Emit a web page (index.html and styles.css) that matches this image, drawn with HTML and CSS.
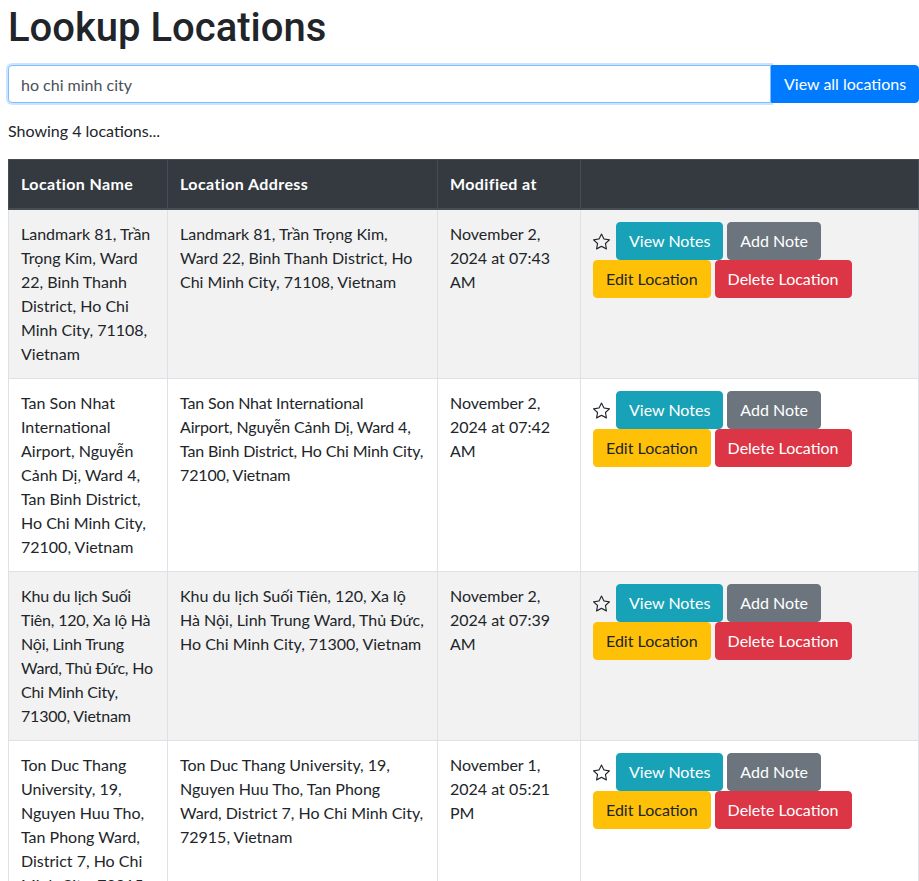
FILE: index.html
```html
<!DOCTYPE html>
<html lang="en">
<head>
<meta charset="utf-8">
<title>Lookup Locations</title>
<link rel="stylesheet" href="styles.css">
</head>
<body>
<h1 class="page-title">Lookup Locations</h1>
<div class="input-group">
  <input class="search-input" type="text" value="ho chi minh city">
  <button class="btn btn-primary btn-append" type="button">View all locations</button>
</div>
<p class="result-count">Showing 4 locations...</p>
<table class="locations">
  <colgroup>
    <col class="col-name">
    <col class="col-address">
    <col class="col-modified">
    <col class="col-actions">
  </colgroup>
  <thead>
    <tr>
      <th>Location Name</th>
      <th>Location Address</th>
      <th>Modified at</th>
      <th></th>
    </tr>
  </thead>
  <tbody>
    <tr>
      <td>Landmark 81, Trần Trọng Kim, Ward 22, Binh Thanh District, Ho Chi Minh City, 71108, Vietnam</td>
      <td>Landmark 81, Trần Trọng Kim, Ward 22, Binh Thanh District, Ho Chi Minh City, 71108, Vietnam</td>
      <td>November 2, 2024 at 07:43 AM</td>
      <td>
        <div class="actions">
          <svg class="star" viewBox="0 0 16 16" width="17" height="17"><path fill="currentColor" d="M2.866 14.85c-.078.444.36.791.746.593l4.39-2.256 4.389 2.256c.386.198.824-.149.746-.592l-.83-4.73 3.522-3.356c.33-.314.16-.888-.282-.95l-4.898-.696L8.465.792a.513.513 0 0 0-.927 0L5.354 5.12l-4.898.696c-.441.062-.612.636-.283.95l3.523 3.356-.83 4.73zm4.905-2.767-3.686 1.894.694-3.957a.56.56 0 0 0-.163-.505L1.71 6.745l4.052-.576a.53.53 0 0 0 .393-.288L8 2.223l1.847 3.658a.53.53 0 0 0 .393.288l4.052.575-2.906 2.77a.56.56 0 0 0-.163.506l.694 3.957-3.686-1.894a.5.5 0 0 0-.461 0z"/></svg>
          <button class="btn btn-info" type="button">View Notes</button>
          <button class="btn btn-secondary" type="button">Add Note</button>
          <button class="btn btn-warning" type="button">Edit Location</button>
          <button class="btn btn-danger" type="button">Delete Location</button>
        </div>
      </td>
    </tr>
    <tr>
      <td>Tan Son Nhat International Airport, Nguyễn Cảnh Dị, Ward 4, Tan Binh District, Ho Chi Minh City, 72100, Vietnam</td>
      <td class="tight-sm">Tan Son Nhat International<br>Airport, Nguyễn Cảnh Dị, Ward 4, Tan Binh District, Ho Chi Minh City, 72100, Vietnam</td>
      <td>November 2, 2024 at 07:42 AM</td>
      <td>
        <div class="actions">
          <svg class="star" viewBox="0 0 16 16" width="17" height="17"><path fill="currentColor" d="M2.866 14.85c-.078.444.36.791.746.593l4.39-2.256 4.389 2.256c.386.198.824-.149.746-.592l-.83-4.73 3.522-3.356c.33-.314.16-.888-.282-.95l-4.898-.696L8.465.792a.513.513 0 0 0-.927 0L5.354 5.12l-4.898.696c-.441.062-.612.636-.283.95l3.523 3.356-.83 4.73zm4.905-2.767-3.686 1.894.694-3.957a.56.56 0 0 0-.163-.505L1.71 6.745l4.052-.576a.53.53 0 0 0 .393-.288L8 2.223l1.847 3.658a.53.53 0 0 0 .393.288l4.052.575-2.906 2.77a.56.56 0 0 0-.163.506l.694 3.957-3.686-1.894a.5.5 0 0 0-.461 0z"/></svg>
          <button class="btn btn-info" type="button">View Notes</button>
          <button class="btn btn-secondary" type="button">Add Note</button>
          <button class="btn btn-warning" type="button">Edit Location</button>
          <button class="btn btn-danger" type="button">Delete Location</button>
        </div>
      </td>
    </tr>
    <tr>
      <td class="tight">Khu du lịch Suối Tiên, 120, Xa lộ Hà Nội, Linh Trung Ward, Thủ Đức, Ho Chi Minh City, 71300, Vietnam</td>
      <td>Khu du lịch Suối Tiên, 120, Xa lộ Hà Nội, Linh Trung Ward, Thủ Đức, Ho Chi Minh City, 71300, Vietnam</td>
      <td>November 2, 2024 at 07:39 AM</td>
      <td>
        <div class="actions">
          <svg class="star" viewBox="0 0 16 16" width="17" height="17"><path fill="currentColor" d="M2.866 14.85c-.078.444.36.791.746.593l4.39-2.256 4.389 2.256c.386.198.824-.149.746-.592l-.83-4.73 3.522-3.356c.33-.314.16-.888-.282-.95l-4.898-.696L8.465.792a.513.513 0 0 0-.927 0L5.354 5.12l-4.898.696c-.441.062-.612.636-.283.95l3.523 3.356-.83 4.73zm4.905-2.767-3.686 1.894.694-3.957a.56.56 0 0 0-.163-.505L1.71 6.745l4.052-.576a.53.53 0 0 0 .393-.288L8 2.223l1.847 3.658a.53.53 0 0 0 .393.288l4.052.575-2.906 2.77a.56.56 0 0 0-.163.506l.694 3.957-3.686-1.894a.5.5 0 0 0-.461 0z"/></svg>
          <button class="btn btn-info" type="button">View Notes</button>
          <button class="btn btn-secondary" type="button">Add Note</button>
          <button class="btn btn-warning" type="button">Edit Location</button>
          <button class="btn btn-danger" type="button">Delete Location</button>
        </div>
      </td>
    </tr>
    <tr>
      <td>Ton Duc Thang University, 19, Nguyen Huu Tho, Tan Phong Ward, District 7, Ho Chi Minh City, 72915, Vietnam</td>
      <td>Ton Duc Thang University, 19, Nguyen Huu Tho, Tan Phong Ward, District 7, Ho Chi Minh City, 72915, Vietnam</td>
      <td>November 1, 2024 at 05:21 PM</td>
      <td>
        <div class="actions">
          <svg class="star" viewBox="0 0 16 16" width="17" height="17"><path fill="currentColor" d="M2.866 14.85c-.078.444.36.791.746.593l4.39-2.256 4.389 2.256c.386.198.824-.149.746-.592l-.83-4.73 3.522-3.356c.33-.314.16-.888-.282-.95l-4.898-.696L8.465.792a.513.513 0 0 0-.927 0L5.354 5.12l-4.898.696c-.441.062-.612.636-.283.95l3.523 3.356-.83 4.73zm4.905-2.767-3.686 1.894.694-3.957a.56.56 0 0 0-.163-.505L1.71 6.745l4.052-.576a.53.53 0 0 0 .393-.288L8 2.223l1.847 3.658a.53.53 0 0 0 .393.288l4.052.575-2.906 2.77a.56.56 0 0 0-.163.506l.694 3.957-3.686-1.894a.5.5 0 0 0-.461 0z"/></svg>
          <button class="btn btn-info" type="button">View Notes</button>
          <button class="btn btn-secondary" type="button">Add Note</button>
          <button class="btn btn-warning" type="button">Edit Location</button>
          <button class="btn btn-danger" type="button">Delete Location</button>
        </div>
      </td>
    </tr>
  </tbody>
</table>
</body>
</html>
```
FILE: styles.css
```css
html {
  scrollbar-width: none;
}
html::-webkit-scrollbar {
  display: none;
}
body {
  margin: 0;
  padding: 4px 0 0 8px;
  font-family: Lato, "Liberation Sans", sans-serif;
  font-size: 16px;
  line-height: 1.5;
  color: #212529;
  background: #fff;
}
.page-title {
  margin: 0 0 13px;
  font-family: Roboto, Lato, sans-serif;
  font-size: 40px;
  font-weight: 500;
  line-height: 1.2;
}
.input-group {
  display: flex;
  width: 911px;
}
.search-input {
  flex: 1;
  min-width: 0;
  height: 38px;
  box-sizing: border-box;
  padding: 6px 12px;
  font-family: inherit;
  font-size: 16px;
  line-height: 1.5;
  color: #495057;
  background: #fff;
  border: 1px solid #80bdff;
  border-radius: 4px 0 0 4px;
  box-shadow: 0 0 0 2px rgba(0, 123, 255, .2);
  outline: none;
}
.btn {
  display: inline-block;
  box-sizing: border-box;
  height: 38px;
  padding: 6px 12px;
  font-family: inherit;
  font-size: 16px;
  font-weight: 400;
  line-height: 1.5;
  border: 1px solid transparent;
  border-radius: 4px;
  white-space: nowrap;
  cursor: pointer;
}
.btn-append {
  border-radius: 0 4px 4px 0;
  width: 148px;
}
.btn-primary { color: #fff; background: #007bff; border-color: #007bff; }
.btn-info { color: #fff; background: #17a2b8; border-color: #17a2b8; }
.btn-secondary { color: #fff; background: #6c757d; border-color: #6c757d; }
.btn-warning { color: #212529; background: #ffc107; border-color: #ffc107; }
.btn-danger { color: #fff; background: #dc3545; border-color: #dc3545; }
.result-count {
  margin: 16px 0 16px;
}
.locations {
  width: 911px;
  table-layout: fixed;
  border-collapse: collapse;
}
.col-name { width: 159px; }
.col-address { width: 270px; }
.col-modified { width: 143px; }
.locations th,
.locations td {
  padding: 12px;
  text-align: left;
  vertical-align: top;
  border: 1px solid #dee2e6;
}
.locations thead th {
  color: #fff;
  background: #343a40;
  border-color: #454d55;
  border-bottom-width: 2px;
  vertical-align: bottom;
  font-weight: 700;
  letter-spacing: .4px;
}
.locations tbody tr:nth-child(odd) {
  background: #f2f2f2;
}
.locations td.tight {
  letter-spacing: -.2px;
}
.locations td.tight-sm {
  letter-spacing: -.15px;
}
.actions {
  display: flex;
  flex-wrap: wrap;
  align-items: center;
  column-gap: 4px;
}
.star {
  display: block;
  margin-right: 2px;
  color: #212529;
}
```
